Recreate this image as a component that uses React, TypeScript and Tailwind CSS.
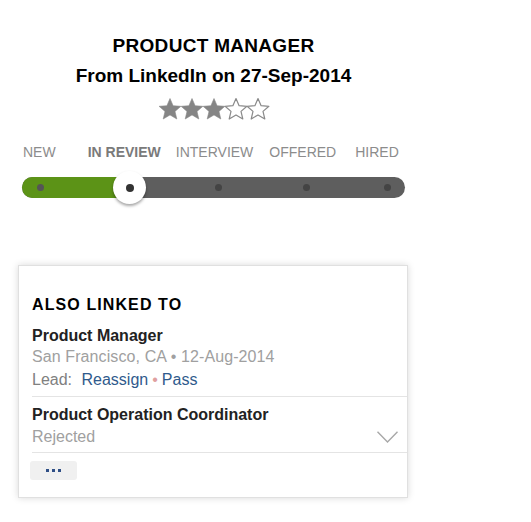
const stages = [
  { label: "NEW", active: false, ml: "ml-0" },
  { label: "IN REVIEW", active: true, ml: "ml-[32px]" },
  { label: "INTERVIEW", active: false, ml: "ml-[15px]" },
  { label: "OFFERED", active: false, ml: "ml-[16px]" },
  { label: "HIRED", active: false, ml: "ml-[19px]" },
];

const Star = ({ filled }: { filled: boolean }) => (
  <svg width="24" height="24" viewBox="0 0 24 24">
    <path
      d="M12 1.5l3.1 7.2 7.8.6-5.9 5.1 1.8 7.6L12 17.9 5.2 22l1.8-7.6-5.9-5.1 7.8-.6z"
      fill={filled ? "#858585" : "#fff"}
      stroke="#8a8a8a"
      strokeWidth={filled ? 0.6 : 1.2}
      strokeLinejoin="round"
    />
  </svg>
);

const App = () => {
  return (
    <div className="w-[531px] h-[522px] bg-white font-['Liberation_Sans',Arial,sans-serif]">
      <div className="w-[427px] pt-[31px]">
        {/* Header */}
        <div className="flex flex-col items-center text-black font-bold text-[19px] leading-[30px]">
          <h1 className="tracking-[0.3px]">PRODUCT MANAGER</h1>
          <h2>From LinkedIn on 27-Sep-2014</h2>
        </div>
        <div className="flex justify-center mt-[6px] -space-x-[2px]">
          {[1, 2, 3, 4, 5].map((n) => (
            <Star key={n} filled={n <= 3} />
          ))}
        </div>

        {/* Stages */}
        <div className="flex pl-[23px] mt-[22px] text-[14px] leading-[18px] text-[#8c8c8c]">
          {stages.map((s) => (
            <span key={s.label} className={`${s.ml} ${s.active ? "font-bold text-[#7a7a7a]" : ""}`}>
              {s.label}
            </span>
          ))}
        </div>
        <div className="relative mx-[22px] mt-[16px] h-[21px] rounded-full bg-[#5e5e5e]">
          <div className="absolute left-0 top-0 h-full w-[110px] rounded-l-full bg-[#5c9317]" />
          <span className="absolute left-[15px] top-[7px] w-[7px] h-[7px] rounded-full bg-[#555]" />
          <span className="absolute left-[193px] top-[7px] w-[7px] h-[7px] rounded-full bg-[#444]" />
          <span className="absolute left-[281px] top-[7px] w-[7px] h-[7px] rounded-full bg-[#444]" />
          <span className="absolute left-[362px] top-[7px] w-[7px] h-[7px] rounded-full bg-[#444]" />
          <div className="absolute left-[91px] -top-[6px] w-[33px] h-[33px] rounded-full bg-white shadow-[0_2px_3px_rgba(0,0,0,0.35)] flex items-center justify-center">
            <span className="w-[8px] h-[8px] rounded-full bg-[#333]" />
          </div>
        </div>
      </div>

      {/* Also linked to */}
      <div className="ml-[18px] mt-[67px] w-[390px] border border-[#e0e0e0] bg-white shadow-[0_0_7px_rgba(0,0,0,0.15)] pl-[13px] pt-[29px] pb-[17px]">
        <h3 className="text-[16px] leading-[20px] font-bold tracking-[1.1px] text-black">ALSO LINKED TO</h3>
        <div className="mt-[11px] pb-[4px] border-b border-[#e4e4e4]">
          <div className="text-[16px] leading-[20px] font-bold text-[#222]">Product Manager</div>
          <div className="text-[16px] leading-[22px] text-[#a0a0a0] tracking-[0.1px]">San Francisco, CA • 12-Aug-2014</div>
          <div className="text-[16px] leading-[24px] text-[#808080]">
            Lead:{" "}
            <span className="text-[#2f5a8c] ml-[5px]">Reassign</span>
            <span className="text-[#e0a0a0] mx-[4px]">•</span>
            <span className="text-[#2f5a8c]">Pass</span>
          </div>
        </div>
        <div className="relative pt-[8px] pb-[3px] border-b border-[#e4e4e4]">
          <div className="text-[16px] leading-[20px] font-bold text-[#222]">Product Operation Coordinator</div>
          <div className="text-[16px] leading-[24px] text-[#a0a0a0]">Rejected</div>
          <svg
            className="absolute right-[9px] top-[34px]"
            width="21"
            height="12"
            viewBox="0 0 21 12"
          >
            <polyline points="0.5,0.7 10.5,11 20.5,0.7" fill="none" stroke="#a8a8a8" strokeWidth="1.4" />
          </svg>
        </div>
        <button className="mt-[8px] -ml-[2px] w-[47px] h-[19px] rounded-[3px] bg-[#f0f0f0] flex items-center justify-center gap-[3px]">
          <span className="w-[3px] h-[3px] bg-[#2f4f86]" />
          <span className="w-[3px] h-[3px] bg-[#2f4f86]" />
          <span className="w-[3px] h-[3px] bg-[#2f4f86]" />
        </button>
      </div>
    </div>
  );
};

export default App;
